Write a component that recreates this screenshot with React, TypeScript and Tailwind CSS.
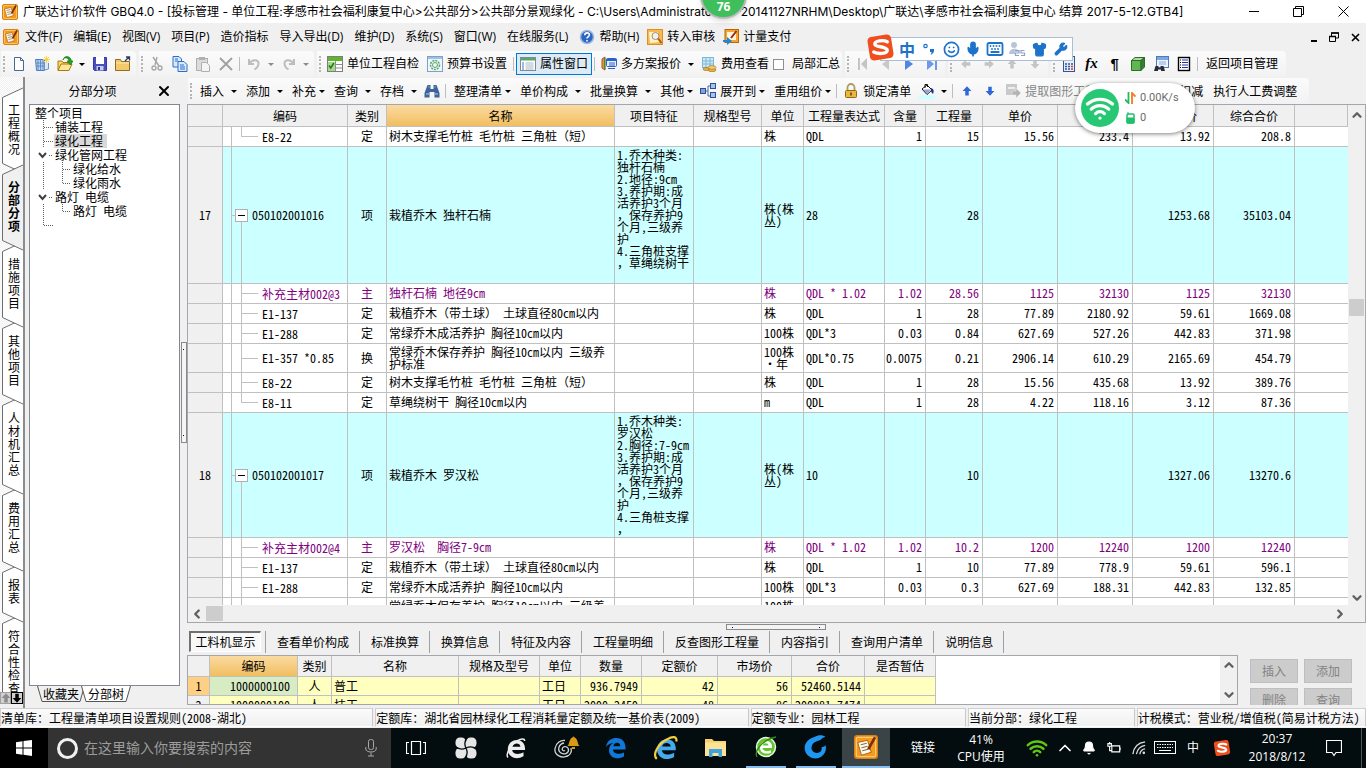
import type { ReactNode } from "react";
import { Mic, Smile, Keyboard, Shirt, Wrench, Wifi, Bell, ChevronUp, ChevronDown, ChevronLeft, ChevronRight, X } from "lucide-react";

type IconProps = { children: ReactNode; w?: number; h?: number; box?: string };

function Svg({ children, w = 16, h = 16, box = "0 0 16 16" }: IconProps) {
  return (
    <svg width={w} height={h} viewBox={box} fill="none" className="shrink-0" aria-hidden="true">
      {children}
    </svg>
  );
}

// hwid also halves full-width punctuation, so keep those marks at full width
function Txt({ children }: { children?: string }) {
  if (!children) return null;
  return (
    <>
      {children.split(/([（），：])/).map((part, i) =>
        /^[（），：]$/.test(part) ? (
          <span key={i} className="[font-feature-settings:normal]">
            {part}
          </span>
        ) : (
          part
        ),
      )}
    </>
  );
}

/* ---------- icons ---------- */

function LogoIcon({ size = 16 }: { size?: number }) {
  return (
    <Svg w={size} h={size}>
      <rect x="0.5" y="0.5" width="15" height="15" rx="1.5" fill="#f59a1c" stroke="#d9800f" />
      <rect x="1.5" y="1.5" width="13" height="13" rx="1" stroke="#fde0a0" strokeWidth="0.6" />
      <path d="M2.500 5 L9 3.500 L11.500 11.500 L5 13.500 Z" fill="#fffaf0" stroke="#a85a08" strokeWidth="0.600" />
      <path d="M4.500 6.500l4-1M5 8.500l4-1M5.500 10.500l4-1" stroke="#8a6a42" strokeWidth="0.700" />
      <path d="M14 1.500 L9.500 9.500" stroke="#7a2f0b" strokeWidth="1.700" />
    </Svg>
  );
}

const NewIcon = () => (
  <Svg>
    <path d="M3.500 1.500h6l3 3v10h-9z" fill="#fff" stroke="#4a6894" />
    <path d="M9.500 1.500v3h3" stroke="#4a6894" />
  </Svg>
);

const BuildingIcon = () => (
  <Svg>
    <path d="M1.500 3.500h9v11h-8z" fill="#b9d3f1" stroke="#4f7fbf" />
    <path d="M4 4v10M6.500 4v10M9 4v10M2 7h8M2 10h8" stroke="#4f7fbf" strokeWidth="0.800" />
    <path d="M10.500 5v9l4-1V7" fill="#dde9f7" stroke="#6f93c4" />
    <path d="M12.500 0v7M9 3.500h7M10 1l5 5M15 1l-5 5" stroke="#f8d34a" />
  </Svg>
);

const OpenIcon = () => (
  <Svg>
    <path d="M1 14V5h4l1 1.500h5V8" fill="#f8d76b" stroke="#a97a12" />
    <path d="M1 14.500 4 8h11l-3 6.500z" fill="#fde795" stroke="#a97a12" />
    <path d="M6 4c1-3 5-3 6 1h-2l3.500 4L16 5h-1.500C13.500-.5 7-1 6 4z" fill="#22a322" stroke="#0c6b0c" strokeWidth="0.600" />
  </Svg>
);

const SaveIcon = () => (
  <Svg>
    <path d="M1.500 1.500h13v13h-12l-1-1z" fill="#4a4fc0" stroke="#3438a0" />
    <rect x="4" y="1" width="8" height="7" fill="#fff" />
    <rect x="4.500" y="10" width="7" height="4.500" fill="#c8cdea" />
    <rect x="6" y="11" width="2" height="3" fill="#27348b" />
  </Svg>
);

const FolderIcon = () => (
  <Svg>
    <path d="M.5 14.500V3.500h5l1 2h8v9z" fill="#f3c96a" stroke="#8d6d20" />
    <path d="M1 7h13" stroke="#fde9b0" />
    <path d="M10 5l4-4M11 1h3.500v3.500" stroke="#2b3f66" strokeWidth="1.300" />
  </Svg>
);

const CutIcon = () => (
  <Svg>
    <path d="M4 1l6 9M8 1L6 9" stroke="#a5a5a5" strokeWidth="1.400" />
    <circle cx="5" cy="12" r="2" stroke="#a5a5a5" strokeWidth="1.300" />
    <circle cx="11" cy="12" r="2" stroke="#a5a5a5" strokeWidth="1.300" />
  </Svg>
);

const CopyIcon = () => (
  <Svg>
    <path d="M1 .5h6l2.500 2.500v8H1z" fill="#d9e8fb" stroke="#2a6fc9" />
    <path d="M6 5.500h6l3 3v7H6z" fill="#d9e8fb" stroke="#2a6fc9" />
    <path d="M8 9h4M8 11h5M8 13h5M3 3h3M3 5h3" stroke="#2a6fc9" />
  </Svg>
);

const PasteIcon = () => (
  <Svg>
    <rect x="1.500" y="2.500" width="11" height="12" fill="#dcdcdc" stroke="#b0b0b0" />
    <rect x="4" y="1" width="6" height="3" fill="#b0b0b0" />
    <path d="M6.500 6.500h5l3 3v6h-8z" fill="#f4f4f4" stroke="#b0b0b0" />
  </Svg>
);

const DeleteIcon = () => (
  <Svg>
    <path d="M2 2l12 12M14 2L2 14" stroke="#a0a0a0" strokeWidth="1.800" />
  </Svg>
);

const UndoIcon = () => (
  <Svg>
    <path d="M3 3v5h5M3.500 7.500C6 3 13 3 12.500 8c-.2 2-1.500 4-4 5.500" stroke="#bdbdbd" strokeWidth="2" />
  </Svg>
);

const RedoIcon = () => (
  <Svg>
    <path d="M13 3v5H8M12.500 7.500C10 3 3 3 3.500 8c.2 2 1.500 4 4 5.500" stroke="#bdbdbd" strokeWidth="2" />
  </Svg>
);

const SheetIcon = () => (
  <Svg>
    <rect x=".5" y=".5" width="15" height="15" fill="#fff" stroke="#7d7d7d" />
    <rect x="1" y="1" width="14" height="4" fill="#5cb82a" />
    <path d="M1 8.500h14M1 12h14M8.500 5v10" stroke="#8f8f8f" />
    <rect x="1" y="6" width="7" height="9" fill="#a5d88a" />
    <path d="M2 9.500l1.800 2.500 3-5" stroke="#1f7a1f" strokeWidth="1.500" />
  </Svg>
);

const GearIcon = () => (
  <Svg>
    <rect x=".5" y=".5" width="15" height="15" fill="#eef6fd" stroke="#7da2c6" />
    <rect x="1" y="1" width="14" height="2" fill="#9cc3e6" />
    <circle cx="8" cy="9" r="4.500" stroke="#5fa567" strokeWidth="1.500" strokeDasharray="2 1" />
    <circle cx="8" cy="9" r="2.500" stroke="#5fa567" />
  </Svg>
);

const PropIcon = () => (
  <Svg>
    <rect x=".5" y="1.500" width="15" height="13" fill="#fff" stroke="#7e8b97" />
    <rect x="1" y="2" width="14" height="2.500" fill="#58a869" />
    <path d="M2 7h2M2 9h2M2 11h2M2 13h2" stroke="#3a7ab8" />
    <path d="M5.500 7h8M5.500 9h8M5.500 11h8M5.500 13h8" stroke="#a9b7c4" />
  </Svg>
);

const PlansIcon = () => (
  <Svg>
    <path d="M1 3v9l3 2V1z" fill="#f2a72e" stroke="#cf3b2e" />
    <path d="M3.500 2v11" stroke="#2a9c3a" strokeWidth="1.500" />
    <rect x="5.500" y="2.500" width="10" height="8" rx="1" fill="#e8f1fd" stroke="#2a62c9" />
    <path d="M5.500 4h10" stroke="#2a62c9" strokeWidth="2" />
    <path d="M8 7h6M8 9h6M7 12.500h7" stroke="#2a62c9" />
  </Svg>
);

const CostIcon = () => (
  <Svg>
    <rect x="1.500" y="1.500" width="11" height="10" fill="#cfe8f6" stroke="#7fb8d8" />
    <path d="M1.500 5h11M1.500 8h11M5 2v9M9 2v9" stroke="#7fb8d8" />
    <ellipse cx="11" cy="14" rx="4" ry="1.700" fill="#e7b34a" stroke="#a57a1d" strokeWidth="0.700" />
    <ellipse cx="11" cy="11.500" rx="4" ry="1.800" fill="#f3cd74" stroke="#a57a1d" strokeWidth="0.700" />
    <ellipse cx="5" cy="13" rx="3" ry="1.500" fill="#e7b34a" stroke="#a57a1d" strokeWidth="0.700" />
  </Svg>
);

const FirstIcon = () => (
  <Svg>
    <path d="M4 2v12" stroke="#c4c4c4" strokeWidth="2" />
    <path d="M12 2v12L6 8z" fill="#c4c4c4" />
  </Svg>
);
const PrevIcon = () => (
  <Svg>
    <path d="M11 3v11L4 8z" fill="#c8c8c8" />
  </Svg>
);
const NextIcon = () => (
  <Svg>
    <path d="M4 2v12l8-6z" fill="#4f86e6" />
  </Svg>
);
const LastIcon = () => (
  <Svg>
    <path d="M3 2v12l7-6z" fill="#6a9ae8" />
    <path d="M12 2v12" stroke="#6a9ae8" strokeWidth="2" />
  </Svg>
);

function ArrowIcon({ turn, fill }: { turn: number; fill: string }) {
  return (
    <Svg w={14} h={14}>
      <path d="M8 2.500l5 5.500h-3v5H6V8H3z" fill={fill} transform={`rotate(${turn} 8 8)`} />
    </Svg>
  );
}

const CalcIcon = () => (
  <Svg>
    <rect x="2.500" y=".5" width="11" height="15" fill="#e7eefb" stroke="#35558f" />
    <rect x="4" y="2" width="8" height="3" fill="#8aa6d9" />
    <path d="M4 8h2M7 8h2M10 8h2M4 10.500h2M7 10.500h2M4 13h2M7 13h2" stroke="#35558f" strokeWidth="1.500" />
    <path d="M10 10.500h2M10 13h2" stroke="#d43a2a" strokeWidth="1.500" />
  </Svg>
);

const CubeIcon = () => (
  <Svg>
    <path d="M1.500 4.500 5 1.500h9.500L11 4.500z" fill="#a9dca0" stroke="#2f6b2c" />
    <path d="M1.500 4.500H11v10H1.500z" fill="#5fb653" stroke="#2f6b2c" />
    <path d="M11 4.500l3.500-3V11L11 14.500z" fill="#357f30" stroke="#2f6b2c" />
  </Svg>
);

const FindFormIcon = () => (
  <Svg>
    <rect x="3.500" y=".5" width="12" height="11" fill="#eaf2fd" stroke="#4f79bd" />
    <rect x="4" y="1" width="11" height="3" fill="#7ea6e0" />
    <path d="M6 6h7M6 8h7" stroke="#8ba8d4" />
    <path d="M1 15l1.500-5h3v2h2v-2h3l1.500 5H8v-1.500H5V15z" fill="#2b2b33" />
  </Svg>
);

const ListIcon = () => (
  <Svg>
    <rect x="2.500" y="1.500" width="11" height="13" fill="#fff" stroke="#000" strokeWidth="1.400" />
    <path d="M4 4h1M4 6.500h1M4 9h1M4 11.500h1" stroke="#000" />
    <path d="M6 4h6M6 6.500h6M6 9h6M6 11.500h6" stroke="#2330a8" />
  </Svg>
);

const BinocularsIcon = () => (
  <Svg>
    <path d="M3.500 2h3v4h3V2h3l3 8v4.500h-5V9h-5v5.500h-5V10z" fill="#3c6499" />
    <path d="M2 11h3M11 11h3M4.500 4h1M10.500 4h1" stroke="#b9d2f0" />
  </Svg>
);

const ExpandIcon = () => (
  <Svg>
    <path d="M5 8h3M8 3v10M8 3h2M8 13h2" stroke="#4469a8" />
    <rect x=".5" y="5.500" width="5" height="5" fill="#7fa3df" stroke="#2d5196" />
    <rect x="10.500" y=".5" width="5" height="5" fill="#a9c2ec" stroke="#2d5196" />
    <rect x="10.500" y="9.500" width="5" height="5" fill="#a9c2ec" stroke="#2d5196" />
  </Svg>
);

const LockIcon = () => (
  <Svg>
    <path d="M4.500 8V4.500a3.500 3.500 0 0 1 7 0V8" stroke="#b09a60" strokeWidth="1.800" />
    <rect x="2.500" y="7.500" width="11" height="7" rx="1" fill="#e9b83f" stroke="#8f6a12" />
    <path d="M8 9.500v3" stroke="#5d430a" strokeWidth="1.500" />
  </Svg>
);

const BucketIcon = () => (
  <Svg>
    <rect x="0" y="12" width="16" height="4" fill="#ccffff" />
    <path d="M3 6l5-4 5 5-5 4.500z" fill="#fff" stroke="#111" />
    <path d="M4 6.500h8l-4 4z" fill="#8fa3d8" />
    <path d="M6 5V1.500h2.500V4" stroke="#111" />
    <path d="M12 5c3 1 3 3 2 6-1.500-1-2.500-3-2-6z" fill="#1b2e80" />
  </Svg>
);

const ExtractIcon = () => (
  <Svg>
    <rect x="1" y="1" width="11" height="11" fill="#c9c9c9" />
    <path d="M3 5h7" stroke="#eee" strokeWidth="2" />
    <path d="M7 8h4V5l5 5-5 5v-3H7z" fill="#b5b5b5" stroke="#eee" strokeWidth="0.500" />
  </Svg>
);

const HelpIcon = () => (
  <Svg>
    <circle cx="8" cy="8" r="6.500" fill="#2b66c4" stroke="#9fb8de" strokeWidth="1.500" />
    <path d="M5.800 6.200c0-3.200 4.700-3 4.600-.2C10.300 7.600 8 7.600 8 9.600M8 11v1.600" stroke="#fff" strokeWidth="1.600" />
  </Svg>
);

const AuditIcon = () => (
  <Svg>
    <rect x=".5" y=".5" width="15" height="15" fill="#f8b84a" stroke="#d9902a" />
    <path d="M2 3h9l1 10-9 1z" fill="#fff3cf" />
    <circle cx="8.500" cy="7" r="3.500" fill="#eaf2f8" stroke="#b08a5a" />
    <path d="M11 9.500l3.500 4.500" stroke="#b3541e" strokeWidth="2" />
  </Svg>
);

const PayIcon = () => (
  <Svg>
    <rect x="2" y=".5" width="13.500" height="13" fill="#f7a530" stroke="#b5670b" />
    <path d="M4 3h9v8H4z" fill="#fff6dc" />
    <path d="M13.500 2L8 9" stroke="#9c2b12" strokeWidth="2" />
    <path d="M0 11h4V8l5 4-5 4v-3H0z" fill="#1e88d8" />
  </Svg>
);

function SogouIcon({ size }: { size: number }) {
  return (
    <Svg w={size} h={size} box="0 0 28 28">
      <rect x="2.500" y="2.500" width="23" height="23" rx="4" fill="#f04e1c" transform="rotate(-9 14 14)" />
      <path d="M20.500 8.500c-4-2.200-12-1-12 2 0 3.300 12 2.300 12 6.200 0 3.500-8.500 4-13 1.600" stroke="#fff" strokeWidth="3.300" strokeLinecap="round" />
    </Svg>
  );
}

/* ---------- toolbar pieces ---------- */

function Group({ children }: { children: ReactNode }) {
  return (
    <div className="flex h-full shrink-0 items-center rounded-r-sm bg-linear-to-b from-[#fbfbfb] to-[#f2f2f2] pr-0.5">
      <span className="flex w-1.5 justify-center">
        <span className="h-4 border-l-2 border-dotted border-[#b4b4b4]" />
      </span>
      {children}
    </div>
  );
}

function IconBtn({ label, children }: { label: string; children: ReactNode }) {
  return (
    <button aria-label={label} className="flex h-6 w-[23px] shrink-0 items-center justify-center">
      {children}
    </button>
  );
}

function Caret({ dim }: { dim?: boolean }) {
  return (
    <span className="flex w-3 shrink-0 justify-center">
      <Svg w={6} h={3} box="0 0 6 3">
        <path d="M0 0h6L3 3z" fill={dim ? "#8c8c8c" : "#000"} />
      </Svg>
    </span>
  );
}

function Sep() {
  return (
    <span className="flex w-[5px] shrink-0 justify-center">
      <span className="h-[14px] w-px bg-[#bdbdbd]" />
    </span>
  );
}

function LabelBtn({ icon, text }: { icon: ReactNode; text: string }) {
  return (
    <button className="flex h-6 shrink-0 items-center gap-1 px-1">
      {icon}
      {text}
    </button>
  );
}

function DropBtn({ text, wide }: { text: string; wide?: boolean }) {
  return (
    <button className="flex h-6 shrink-0 items-center pl-1.5">
      {text}
      <span className={wide ? "ml-1" : ""}>
        <Caret />
      </span>
    </button>
  );
}

/* ---------- top ---------- */

function TitleBar() {
  return (
    <header className="flex h-[23px] shrink-0 items-center bg-white pl-0.5">
      <LogoIcon size={16} />
      <h1 className="ml-[5px] min-w-0 flex-1 truncate font-['Inter','Noto_Sans_CJK_SC',sans-serif]">
        广联达计价软件 GBQ4.0 - [投标管理 - 单位工程:孝感市社会福利康复中心&gt;公共部分&gt;公共部分景观绿化 - C:\Users\Administrator.PC-20141127NRHM\Desktop\广联达\孝感市社会福利康复中心 结算 2017-5-12.GTB4]
      </h1>
      <button aria-label="最小化" className="flex w-[45px] justify-center">
        <span className="h-px w-[10px] bg-black" />
      </button>
      <button aria-label="还原" className="flex w-[45px] justify-center">
        <Svg w={11} h={11} box="0 0 11 11">
          <path d="M.5 2.500h8v8h-8zM2.500 2V.5h8v8H9" stroke="#000" />
        </Svg>
      </button>
      <button aria-label="关闭" className="flex w-[45px] justify-center">
        <Svg w={11} h={11} box="0 0 11 11">
          <path d="M.5.5l10 10M10.500.5l-10 10" stroke="#000" />
        </Svg>
      </button>
    </header>
  );
}

const menus = ["文件(F)", "编辑(E)", "视图(V)", "项目(P)", "造价指标", "导入导出(D)", "维护(D)", "系统(S)", "窗口(W)", "在线服务(L)"];

function MenuBar() {
  return (
    <nav className="flex h-7 shrink-0 items-center pl-[3px]">
      <LogoIcon size={16} />
      <div className="ml-1.5 flex items-center gap-[11px]">
        {menus.map((m) => (
          <button key={m}>{m}</button>
        ))}
        <button className="flex items-center gap-1">
          <HelpIcon />
          帮助(H)
        </button>
      </div>
      <button className="ml-2 flex items-center gap-1">
        <AuditIcon />
        转入审核
      </button>
      <button className="ml-2 flex items-center gap-1">
        <PayIcon />
        计量支付
      </button>
      <div className="ml-auto flex items-center gap-3 pr-1.5">
        <button aria-label="最小化子窗口" className="flex h-[10px] items-end">
          <span className="h-0.5 w-1.5 bg-black" />
        </button>
        <button aria-label="还原子窗口">
          <Svg w={10} h={10} box="0 0 10 10">
            <path d="M.5 4.500h6v5h-6zM2.500 4V1h7v5H7" stroke="#000" />
            <path d="M2 1h8M0 4.500h7" stroke="#000" strokeWidth="1.600" />
          </Svg>
        </button>
        <button aria-label="关闭子窗口">
          <Svg w={9} h={9} box="0 0 9 9">
            <path d="M1 1l7 7M8 1L1 8" stroke="#000" strokeWidth="1.600" />
          </Svg>
        </button>
      </div>
    </nav>
  );
}

function MainToolbar() {
  return (
    <div className="flex h-[26px] shrink-0 items-center gap-[3px] overflow-hidden pl-px">
      <Group>
        <IconBtn label="新建"><NewIcon /></IconBtn>
        <IconBtn label="新建工程"><BuildingIcon /></IconBtn>
        <IconBtn label="打开"><OpenIcon /></IconBtn>
        <Caret />
        <IconBtn label="保存"><SaveIcon /></IconBtn>
        <IconBtn label="目录"><FolderIcon /></IconBtn>
      </Group>
      <Group>
        <IconBtn label="剪切"><CutIcon /></IconBtn>
        <IconBtn label="复制"><CopyIcon /></IconBtn>
        <IconBtn label="粘贴"><PasteIcon /></IconBtn>
        <IconBtn label="删除"><DeleteIcon /></IconBtn>
        <Sep />
        <IconBtn label="撤销"><UndoIcon /></IconBtn>
        <Caret dim />
        <IconBtn label="恢复"><RedoIcon /></IconBtn>
        <Caret dim />
      </Group>
      <Group>
        <LabelBtn icon={<SheetIcon />} text="单位工程自检" />
        <LabelBtn icon={<GearIcon />} text="预算书设置" />
        <Sep />
        <button className="flex h-[22px] shrink-0 items-center gap-1 border border-[#0078d7] bg-[#dcebf8] px-[3px]">
          <PropIcon />
          属性窗口
        </button>
        <Sep />
        <LabelBtn icon={<PlansIcon />} text="多方案报价" />
        <Caret />
        <LabelBtn icon={<CostIcon />} text="费用查看" />
        <label className="flex items-center gap-2">
          <input type="checkbox" className="size-[11px] appearance-none border border-[#8f8f8f] bg-white" />
          局部汇总
        </label>
      </Group>
      <Group>
        <IconBtn label="首行"><FirstIcon /></IconBtn>
        <IconBtn label="上一行"><PrevIcon /></IconBtn>
        <IconBtn label="下一行"><NextIcon /></IconBtn>
        <IconBtn label="末行"><LastIcon /></IconBtn>
      </Group>
      <Group>
        <IconBtn label="左移"><ArrowIcon turn={-90} fill="#c4c4c4" /></IconBtn>
        <IconBtn label="右移"><ArrowIcon turn={90} fill="#c4c4c4" /></IconBtn>
        <IconBtn label="升级"><ArrowIcon turn={0} fill="#c4c4c4" /></IconBtn>
        <IconBtn label="降级"><ArrowIcon turn={180} fill="#c4c4c4" /></IconBtn>
      </Group>
      <Group>
        <IconBtn label="计算器"><CalcIcon /></IconBtn>
        <IconBtn label="函数">
          <span className="font-['Liberation_Serif',serif] text-[15px] font-bold italic">fx</span>
        </IconBtn>
        <IconBtn label="段落">
          <span className="font-['Liberation_Sans',sans-serif] text-[15px] font-bold">¶</span>
        </IconBtn>
        <IconBtn label="立方体"><CubeIcon /></IconBtn>
        <IconBtn label="查找"><FindFormIcon /></IconBtn>
        <IconBtn label="清单"><ListIcon /></IconBtn>
        <Sep />
        <button className="h-6 px-1.5">返回项目管理</button>
      </Group>
    </div>
  );
}

function EditToolbar() {
  return (
    <div className="flex h-[26px] shrink-0 items-center overflow-hidden pl-px">
      <Group>
        <DropBtn text="插入" wide />
        <DropBtn text="添加" wide />
        <DropBtn text="补充" />
        <DropBtn text="查询" wide />
        <DropBtn text="存档" wide />
        <IconBtn label="查找"><BinocularsIcon /></IconBtn>
        <Sep />
        <DropBtn text="整理清单" />
        <DropBtn text="单价构成" wide />
        <DropBtn text="批量换算" wide />
        <DropBtn text="其他" />
        <button className="flex h-6 shrink-0 items-center gap-1 pl-1">
          <ExpandIcon />
          <span className="flex items-center">
            展开到
            <Caret />
          </span>
        </button>
        <DropBtn text="重用组价" />
        <Sep />
        <LabelBtn icon={<LockIcon />} text="锁定清单" />
        <IconBtn label="填充颜色"><BucketIcon /></IconBtn>
        <Caret />
        <Sep />
        <IconBtn label="上移"><ArrowIcon turn={0} fill="#2f66d8" /></IconBtn>
        <IconBtn label="下移"><ArrowIcon turn={180} fill="#2f66d8" /></IconBtn>
        <button disabled className="flex h-6 shrink-0 items-center gap-1 px-1 text-[#868686]">
          <ExtractIcon />
          提取图形工程量
        </button>
        <Caret dim />
        <button className="h-6 shrink-0 pl-1.5">配比材料扣减</button>
        <button className="h-6 shrink-0 px-2.5">执行人工费调整</button>
      </Group>
    </div>
  );
}

/* ---------- left side ---------- */

const pages = ["工程概况", "分部分项", "措施项目", "其他项目", "人材机汇总", "费用汇总", "报表", "符合性检查"];

function PageTabs() {
  return (
    <div className="flex w-[25px] shrink-0 flex-col overflow-hidden border-r-2 border-[#8c8c8c] bg-[repeating-conic-gradient(#fff_0_25%,#f0f0f0_0_50%)] bg-size-[2px_2px]">
      <div className="flex min-h-0 flex-1 flex-col overflow-hidden pt-[10px] pl-0.5">
        {pages.map((p, i) => {
          const active = i === 1;
          const h = p.length * 13 + 35;
          return (
            <button
              key={p}
              className={
                active
                  ? "relative -mb-[10px] shrink-0 pt-4 pb-[19px] pl-1.5 font-bold"
                  : "relative -mb-[10px] shrink-0 pt-4 pb-[19px] pl-1.5"
              }
              style={{ zIndex: active ? 20 : 10 - i }}
            >
              <svg width="22" height={h} className="absolute top-0 left-0" aria-hidden="true">
                <path
                  d={`M22 .5 L.5 10.500 V${h - 10.5} L22 ${h - 0.5}`}
                  fill={active ? "#f0f0f0" : "#fff"}
                  stroke="#6d6d6d"
                />
              </svg>
              <span className="relative block w-3 text-left leading-[13px] break-all">{p}</span>
            </button>
          );
        })}
      </div>
      <div className="z-30 flex h-4 shrink-0 bg-[#f0f0f0]">
        <button aria-label="上一页" className="flex h-3 w-[11px] items-center justify-center border border-[#a0a0a0] bg-[#d0d0d0]">
          <ArrowIcon turn={0} fill="#8c8c8c" />
        </button>
        <button aria-label="下一页" className="flex h-3 w-3 items-center justify-center border border-black bg-[#d0d0d0]">
          <ArrowIcon turn={180} fill="#000" />
        </button>
      </div>
    </div>
  );
}

type Node = { text: string; level: number; open?: boolean; selected?: boolean; last?: boolean };

const nodes: Node[] = [
  { text: "铺装工程", level: 1 },
  { text: "绿化工程", level: 1, selected: true },
  { text: "绿化管网工程", level: 1, open: true },
  { text: "绿化给水", level: 2 },
  { text: "绿化雨水", level: 2, last: true },
  { text: "路灯 电缆", level: 1, open: true },
  { text: "路灯 电缆", level: 2, last: true },
  { text: "", level: 1, last: true },
];

function Guide({ node }: { node: Node }) {
  const dot = { stroke: "#606060", strokeDasharray: "1 1" };
  if (node.level === 2) {
    return (
      <Svg w={37} h={14} box="0 0 37 14">
        <path d="M8.500 0V14" {...dot} />
        <path d={node.last ? "M27.500 0V8" : "M27.500 0V14"} {...dot} />
        <path d="M28 7.500H36" {...dot} />
      </Svg>
    );
  }
  return (
    <Svg w={19} h={14} box="0 0 19 14">
      {node.open ? (
        <path d="M4 5l3.500 4L11 5" stroke="#404040" strokeWidth="2" />
      ) : (
        <path d={node.last ? "M8.500 0V8" : "M8.500 0V14"} {...dot} />
      )}
      <path d={node.open ? "M14 7.500H18" : "M9 7.500H18"} {...dot} />
    </Svg>
  );
}

function SectionPanel() {
  return (
    <aside className="flex w-[155px] shrink-0 flex-col pt-px pl-1">
      <div className="flex h-[26px] shrink-0 items-center">
        <h2 className="flex-1 text-center">分部分项</h2>
        <button aria-label="关闭面板" className="mr-2">
          <X size={16} strokeWidth={3} color="#000" />
        </button>
      </div>
      <div className="min-h-0 flex-1 border border-[#828790] bg-white px-[5px] pt-px leading-[14px]">
        <div>整个项目</div>
        <ul>
          {nodes.map((n, i) => (
            <li key={i} className="flex h-[14px] items-center">
              <Guide node={n} />
              <span className={n.selected ? "bg-[#d9d9d9] px-px pr-1" : "px-px"}>{n.text}</span>
            </li>
          ))}
        </ul>
      </div>
      <div className="flex h-[22px] shrink-0 items-start pl-2 leading-4">
        <button className="relative h-4 w-12">
          <Svg w={48} h={16} box="0 0 48 16">
            <path d="M.5 0L5 15.500H43L47.500 0" fill="#f0f0f0" stroke="#555" />
          </Svg>
          <span className="absolute inset-0">收藏夹</span>
        </button>
        <button className="relative -ml-1 h-4 w-[50px]">
          <Svg w={50} h={16} box="0 0 50 16">
            <path d="M.5 0L5 15.500H45L49.500 0" fill="#fff" stroke="#555" />
          </Svg>
          <span className="absolute inset-0">分部树</span>
        </button>
      </div>
    </aside>
  );
}

/* ---------- main grid ---------- */

type Row = {
  no?: string;
  code: string;
  kind: string;
  name: string;
  feature?: string;
  unit: string;
  nums: string[];
  h: string;
  tone?: "item" | "main";
  last?: boolean;
};

const H = "h-[20px]";

const rows: Row[] = [
  { code: "E8-22", kind: "定", name: "树木支撑毛竹桩 毛竹桩 三角桩（短）", unit: "株", nums: ["QDL", "1", "15", "15.56", "233.4", "13.92", "208.8"], h: H, last: true },
  {
    no: "17", code: "050102001016", kind: "项", name: "栽植乔木 独杆石楠", tone: "item",
    feature: "1.乔木种类:\n独杆石楠\n2.地径:9cm\n3.养护期:成\n活养护3个月\n，保存养护9\n个月,三级养\n护\n4.三角桩支撑\n，草绳绕树干\n ",
    unit: "株(株\n丛)", nums: ["28", "", "28", "", "", "1253.68", "35103.04"], h: "h-[137px]",
  },
  { code: "补充主材002@3", kind: "主", name: "独杆石楠 地径9cm", unit: "株", nums: ["QDL * 1.02", "1.02", "28.56", "1125", "32130", "1125", "32130"], h: H, tone: "main" },
  { code: "E1-137", kind: "定", name: "栽植乔木（带土球） 土球直径80cm以内", unit: "株", nums: ["QDL", "1", "28", "77.89", "2180.92", "59.61", "1669.08"], h: H },
  { code: "E1-288", kind: "定", name: "常绿乔木成活养护 胸径10cm以内", unit: "100株", nums: ["QDL*3", "0.03", "0.84", "627.69", "527.26", "442.83", "371.98"], h: H },
  { code: "E1-357 *0.85", kind: "换", name: "常绿乔木保存养护 胸径10cm以内 三级养\n护标准", unit: "100株\n・年", nums: ["QDL*0.75", "0.0075", "0.21", "2906.14", "610.29", "2165.69", "454.79"], h: "h-[29px]" },
  { code: "E8-22", kind: "定", name: "树木支撑毛竹桩 毛竹桩 三角桩（短）", unit: "株", nums: ["QDL", "1", "28", "15.56", "435.68", "13.92", "389.76"], h: H },
  { code: "E8-11", kind: "定", name: "草绳绕树干 胸径10cm以内", unit: "m", nums: ["QDL", "1", "28", "4.22", "118.16", "3.12", "87.36"], h: H, last: true },
  {
    no: "18", code: "050102001017", kind: "项", name: "栽植乔木 罗汉松", tone: "item",
    feature: "1.乔木种类:\n罗汉松\n2.胸径:7-9cm\n3.养护期:成\n活养护3个月\n，保存养护9\n个月,三级养\n护\n4.三角桩支撑\n，",
    unit: "株(株\n丛)", nums: ["10", "", "10", "", "", "1327.06", "13270.6"], h: "h-[125px]",
  },
  { code: "补充主材002@4", kind: "主", name: "罗汉松  胸径7-9cm", unit: "株", nums: ["QDL * 1.02", "1.02", "10.2", "1200", "12240", "1200", "12240"], h: H, tone: "main" },
  { code: "E1-137", kind: "定", name: "栽植乔木（带土球） 土球直径80cm以内", unit: "株", nums: ["QDL", "1", "10", "77.89", "778.9", "59.61", "596.1"], h: H },
  { code: "E1-288", kind: "定", name: "常绿乔木成活养护 胸径10cm以内", unit: "100株", nums: ["QDL*3", "0.03", "0.3", "627.69", "188.31", "442.83", "132.85"], h: H },
  { code: "", kind: "", name: "常绿乔木保存养护 胸径10cm以内 三级养\n护标准", unit: "100株\n・年", nums: ["", "", "", "", "", "", ""], h: "h-[29px]" },
];

const heads = ["", "编码", "类别", "名称", "项目特征", "规格型号", "单位", "工程量表达式", "含量", "工程量", "单价", "合价", "综合单价", "综合合价", ""];

function CodeCell({ row }: { row: Row }) {
  if (row.tone === "item") {
    return (
      <div className="flex h-full">
        <span className="w-[9px] border-r border-[#c0c0c0]" />
        <span className="flex w-4 flex-col">
          <span className="flex-1" />
          <span className="flex items-center">
            <span className="h-px w-[3px] bg-[#c0c0c0]" />
            <button aria-label="折叠" className="flex size-[13px] items-center justify-center border border-[#b0b0b0] bg-white">
              <span className="h-px w-[7px] bg-black" />
            </button>
          </span>
          <span className="ml-[9px] flex-1 border-l border-[#c0c0c0]" />
        </span>
        <span className="ml-1 self-center">{row.code}</span>
      </div>
    );
  }
  return (
    <div className="flex h-full">
      <span className="w-[9px] border-r border-[#c0c0c0]" />
      <span className={row.last ? "h-1/2 w-[10px] border-r border-[#c0c0c0]" : "w-[10px] border-r border-[#c0c0c0]"} />
      {row.code && <span className="h-px w-4 self-center bg-[#c0c0c0]" />}
      <span className="ml-1 self-center">{row.code}</span>
    </div>
  );
}

const cell = "border-r border-b border-[#c0c0c0] p-0";
const text = "border-r border-b border-[#c0c0c0] p-0 pb-px";

function MainGrid() {
  return (
    <section className="flex min-h-0 flex-1 flex-col border border-[#a5a5ad] bg-[#f0f0f0]">
      <div className="flex min-h-0 flex-1">
        <div className="min-w-0 flex-1 overflow-hidden bg-white">
          <table className="w-full table-fixed border-separate border-spacing-0 leading-3">
            <colgroup>
              <col className="w-[35px]" />
              <col className="w-[125px]" />
              <col className="w-[39px]" />
              <col className="w-[228px]" />
              <col className="w-[79px]" />
              <col className="w-[68px]" />
              <col className="w-[42px]" />
              <col className="w-[81px]" />
              <col className="w-[41px]" />
              <col className="w-[57px]" />
              <col className="w-[75px]" />
              <col className="w-[75px]" />
              <col className="w-[81px]" />
              <col className="w-[81px]" />
              <col />
            </colgroup>
            <thead>
              <tr>
                {heads.map((t, i) => (
                  <th
                    key={i}
                    className={
                      t === "名称"
                        ? `${cell} h-[22px] bg-linear-to-b from-[#fbdba0] to-[#f1be5e] font-normal`
                        : `${cell} h-[22px] bg-[#f0f0f0] font-normal whitespace-nowrap`
                    }
                  >
                    {t}
                  </th>
                ))}
              </tr>
            </thead>
            <tbody>
              {rows.map((r, i) => (
                <tr key={i} className={r.tone === "item" ? "bg-[#ccffff]" : r.tone === "main" ? "text-[#800080]" : ""}>
                  <td className={`${cell} ${r.h} bg-[#f0f0f0] text-center`}>{r.no}</td>
                  <td className={`${cell} ${r.h} whitespace-nowrap`}>
                    <CodeCell row={r} />
                  </td>
                  <td className={`${text} text-center`}>{r.kind}</td>
                  <td className={`${text} pl-0.5 whitespace-pre`}>
                    <Txt>{r.name}</Txt>
                  </td>
                  <td className={`${text} pl-0.5 whitespace-pre`}>
                    <Txt>{r.feature}</Txt>
                  </td>
                  <td className={cell} />
                  <td className={`${text} pl-0.5 whitespace-pre`}>{r.unit}</td>
                  {r.nums.map((n, k) => (
                    <td key={k} className={k === 0 ? `${text} pl-0.5` : `${text} pr-[3px] text-right`}>
                      {n}
                    </td>
                  ))}
                  <td className="border-b border-[#c0c0c0]" />
                </tr>
              ))}
            </tbody>
          </table>
        </div>
        <div className="flex w-[17px] shrink-0 flex-col items-center bg-[#f0f0f0]">
          <ChevronUp size={14} strokeWidth={4} color="#606060" className="mt-[3px] shrink-0" />
          <span className="flex-[177]" />
          <span className="h-[17px] w-[15px] bg-[#cdcdcd]" />
          <span className="flex-[275]" />
          <ChevronDown size={14} strokeWidth={4} color="#606060" className="shrink-0" />
        </div>
      </div>
      <div className="flex h-[17px] shrink-0 items-center bg-[#f0f0f0] pr-[18px]">
        <ChevronLeft size={14} strokeWidth={4} color="#606060" className="ml-0.5" />
        <span className="ml-0.5 h-[15px] w-[17px] bg-[#cdcdcd]" />
        <ChevronRight size={14} strokeWidth={4} color="#606060" className="ml-auto" />
      </div>
    </section>
  );
}

/* ---------- detail area ---------- */

const detailTabs = ["查看单价构成", "标准换算", "换算信息", "特征及内容", "工程量明细", "反查图形工程量", "内容指引", "查询用户清单", "说明信息"];
const detailHeads = ["", "编码", "类别", "名称", "规格及型号", "单位", "数量", "定额价", "市场价", "合价", "是否暂估"];
const detailRows = [
  ["1", "1000000100", "人", "普工", "", "工日", "936.7949", "42", "56", "52460.5144", ""],
  ["2", "1000000100", "人", "技工", "", "工日", "2090.2459", "48", "86", "200881.7474", ""],
];
const ops = ["插入", "添加", "删除", "查询"];

function Detail() {
  return (
    <>
      <div className="flex h-2 shrink-0 items-center justify-center pr-px">
        <div className="flex h-1.5 w-[100px] items-center justify-between border border-[#8a8a8a] bg-[#f4f4f4] px-[5px]">
          <span className="size-px bg-[#00008b]" />
          <span className="size-px bg-[#00008b]" />
        </div>
      </div>
      <div className="flex h-[22px] shrink-0 items-stretch pl-0.5">
        <button className="h-[21px] w-[72px] border-t-2 border-r border-b border-l-2 border-t-[#707070] border-r-white border-b-white border-l-[#707070] bg-[#f8f8f8]">
          工料机显示
        </button>
        <span className="h-[22px] w-[5px] border-r border-[#a0a0a0]" />
        {detailTabs.map((t) => (
          <button key={t} className="h-[22px] border-r border-[#a0a0a0] pr-[10px] pl-[11px]">
            {t}
          </button>
        ))}
      </div>
      <div className="mt-0.5 mb-[3px] flex h-[50px] shrink-0">
        <div className="flex min-w-0 flex-1 overflow-hidden border border-[#a5a5ad] bg-white">
          <div className="flex-1 overflow-hidden">
            <table className="w-[748px] table-fixed border-separate border-spacing-0 leading-3">
              <colgroup>
                <col className="w-[22px]" />
                <col className="w-[88px]" />
                <col className="w-[34px]" />
                <col className="w-[127px]" />
                <col className="w-[81px]" />
                <col className="w-[41px]" />
                <col className="w-[61px]" />
                <col className="w-[76px]" />
                <col className="w-[74px]" />
                <col className="w-[73px]" />
                <col className="w-[71px]" />
              </colgroup>
              <thead>
                <tr>
                  {detailHeads.map((t, i) => (
                    <th
                      key={i}
                      className={
                        i === 1
                          ? `${cell} h-[21px] bg-linear-to-b from-[#fbdba0] to-[#f1be5e] font-normal`
                          : `${cell} h-[21px] bg-[#f0f0f0] font-normal`
                      }
                    >
                      {t}
                    </th>
                  ))}
                </tr>
              </thead>
              <tbody>
                {detailRows.map((r, i) => (
                  <tr key={i} className="bg-[#ffffbf]">
                    {r.map((t, k) => {
                      if (k === 0) {
                        return (
                          <td key={k} className={i === 0 ? `${cell} h-[19px] bg-[#ffd084] text-center` : `${cell} h-[19px] bg-[#f0f0f0] text-center`}>
                            {t}
                          </td>
                        );
                      }
                      if (k === 1) {
                        return (
                          <td key={k} className={i === 0 ? `${cell} bg-[#d8ecc4] pr-[7px] text-right` : `${cell} pr-[7px] text-right`}>
                            {t}
                          </td>
                        );
                      }
                      return (
                        <td key={k} className={k > 5 ? `${cell} pr-[3px] text-right` : k === 2 ? `${cell} text-center` : `${cell} pl-0.5`}>
                          {t}
                        </td>
                      );
                    })}
                  </tr>
                ))}
              </tbody>
            </table>
          </div>
          <div className="flex w-[17px] shrink-0 flex-col items-center justify-between bg-[#f0f0f0] py-0.5">
            <ChevronUp size={14} strokeWidth={4} color="#606060" />
            <ChevronDown size={14} strokeWidth={4} color="#606060" />
          </div>
        </div>
        <div className="grid w-[128px] shrink-0 grid-cols-2 content-start gap-x-1.5 gap-y-[5px] overflow-hidden pt-1 pr-[14px] pl-3">
          {ops.map((o) => (
            <button key={o} disabled className="h-6 border border-[#bfbfbf] bg-[#cccccc] text-[#838383]">
              {o}
            </button>
          ))}
        </div>
      </div>
    </>
  );
}

/* ---------- bottom ---------- */

function StatusBar() {
  const box = "truncate border border-t-[#d0d0d0] border-r-[#c8c8c8] border-b-white border-l-[#d0d0d0] bg-linear-to-b from-[#fbfbfb] to-[#f0f0f0] leading-[17px]";
  return (
    <footer className="flex h-5 shrink-0 gap-0.5 bg-[#f0f0f0] pb-px">
      <div className={`${box} flex-[374]`}><Txt>清单库：工程量清单项目设置规则(2008-湖北)</Txt></div>
      <div className={`${box} flex-[374]`}><Txt>定额库：湖北省园林绿化工程消耗量定额及统一基价表(2009)</Txt></div>
      <div className={`${box} flex-[215]`}><Txt>定额专业：园林工程</Txt></div>
      <div className={`${box} flex-[166]`}><Txt>当前分部：绿化工程</Txt></div>
      <div className={`${box} flex-[229]`}><Txt>计税模式：营业税/增值税(简易计税方法)</Txt></div>
    </footer>
  );
}

function TaskBtn({ label, state, children }: { label: string; state?: "run" | "front"; children: ReactNode }) {
  return (
    <button aria-label={label} className="flex h-10 w-[50px] shrink-0 flex-col px-px">
      <span className={state === "front" ? "flex w-full flex-1 items-center justify-center bg-[#3a4446]" : "flex w-full flex-1 items-center justify-center"}>
        {children}
      </span>
      {state && <span className={state === "front" ? "h-0.5 w-full bg-[#85bdf5]" : "mx-auto h-0.5 w-10 bg-[#85bdf5]"} />}
    </button>
  );
}

function LetterE({ color }: { color: string }) {
  return (
    <path
      fillRule="evenodd"
      d="M21 14H8.200c.3 4 6.200 5.300 11.300 2.300v4C11.500 25 3.500 20.500 3.800 13.200 4 7.600 8 4 12.800 4c5.500 0 8.700 4.200 8.200 10zM8.400 10.700h8c-.2-4.200-7-4.400-8 0z"
      fill={color}
    />
  );
}

function TaskBar() {
  return (
    <div className="flex h-10 shrink-0 items-center overflow-hidden bg-[#030c0e] font-['Open_Sans','Noto_Sans_CJK_SC',sans-serif] text-white">
      <button aria-label="开始" className="flex h-full w-12 shrink-0 items-center justify-center bg-black">
        <Svg>
          <path d="M0 2.200l6.500-.9v6.200H0zM7.500 1.100L16 0v7.500H7.500zM0 8.500h6.500v6.200L0 13.800zM7.500 8.500H16V16l-8.500-1.200z" fill="#fff" />
        </Svg>
      </button>
      <label className="flex h-full w-[343px] shrink-0 items-center bg-[#333333] pl-[9px]">
        <span className="size-[21px] shrink-0 rounded-full border-[3px] border-[#f0f0f0]" />
        <input
          aria-label="搜索"
          placeholder="在这里输入你要搜索的内容"
          className="ml-1.5 min-w-0 flex-1 bg-transparent text-sm text-white outline-none placeholder:text-[#9c9c9c]"
        />
        <Svg w={12} h={18} box="0 0 12 18">
          <rect x="3.500" y=".5" width="5" height="10" rx="2" stroke="#a8a8a8" />
          <path d="M.8 8v2c0 4 10.400 4 10.400 0V8M6 13.500V17M3 17h6" stroke="#a8a8a8" />
        </Svg>
        <span className="w-[14px]" />
      </label>
      <TaskBtn label="任务视图">
        <Svg w={20} h={16} box="0 0 20 16">
          <path d="M5.500 1.500h9v13h-9zM3 2.500H.5v11H3M17 2.500h2.500v11H17" stroke="#fff" strokeWidth="1.200" />
        </Svg>
      </TaskBtn>
      <TaskBtn label="应用">
        <Svg w={22} h={22} box="0 0 22 22">
          <g fill="#e6e6e6">
            <rect x="0.500" y="0.500" width="10.500" height="10.500" rx="4.500" />
            <rect x="11" y="0.500" width="10.500" height="10.500" rx="4.500" />
            <rect x="0.500" y="11" width="10.500" height="10.500" rx="4.500" />
            <rect x="11" y="11" width="10.500" height="10.500" rx="4.500" />
            <circle cx="11" cy="11" r="4" />
          </g>
          <path d="M11 11C9 7 9.500 3.500 12.500 0M11 11c4-2 7.500-1.500 11 1.500M11 11c2 4 1.500 7.500-1.500 11M11 11c-4 2-7.500 1.500-11-1.500" stroke="#030c0e" strokeWidth="1.300" />
        </Svg>
      </TaskBtn>
      <TaskBtn label="浏览器">
        <Svg w={24} h={24} box="0 0 24 24">
          <LetterE color="#ededed" />
          <path d="M4 21.500C1 18 7 8.500 13 5c4-2.500 8-3 7.500 0" stroke="#ededed" strokeWidth="1.500" />
        </Svg>
      </TaskBtn>
      <TaskBtn label="螺旋">
        <Svg w={30} h={26} box="0 0 30 26">
          <path d="M14 15.500c-1.500 1-3.500-.5-2.500-2.500 1.500-2.500 6-1.500 6 2 0 3.500-4.500 5-7.500 3C6 15.500 7.500 9 13 8M17 20.500C11 24.500 3 20 4 13.500 5 7.500 10 5 14 5.500M20 13c1 4-1 7-4 8.500" stroke="#d5d5d5" strokeWidth="1.300" />
          <path d="M16.500 11c2-1.500 1.500-7.500 5-8.500.3-1.500 1.700-1.500 2 0 3.500 1 3 7 5 8.500zM21 12h3v2h-3z" fill="#d99a12" />
        </Svg>
      </TaskBtn>
      <TaskBtn label="Edge">
        <Svg w={24} h={24} box="0 0 24 24">
          <path
            fillRule="evenodd"
            d="M2 11C3 4.500 7.500 2 12.500 2c6 0 9.500 4.500 9 11.500H9c.3 4.500 6.500 5.500 11 3v4c-7 4-15.500 1-15-7 .3-3 2-5.500 4.500-6.500C6.500 7 4 8.500 2 11zm7.300-.8h7c0-4.500-6-4.500-7 0z"
            fill="#0f78d8"
          />
        </Svg>
      </TaskBtn>
      <TaskBtn label="IE">
        <Svg w={26} h={26} box="0 0 24 24">
          <LetterE color="#45a9ee" />
          <path d="M3.500 22C-1 18 5 8 13 4c5-3 9.500-3 8.500 2" stroke="#f7cf3c" strokeWidth="2" />
        </Svg>
      </TaskBtn>
      <TaskBtn label="文件资源管理器">
        <Svg w={22} h={20} box="0 0 22 20">
          <path d="M0 1h7l2 2h12v15H0z" fill="#f5cf6b" />
          <path d="M0 4.500h21V18H0z" fill="#fde295" />
          <path d="M4 19v-8h13v8h-3.500v-4h-6v4z" fill="#3da4e0" />
        </Svg>
      </TaskBtn>
      <TaskBtn label="360浏览器" state="run">
        <Svg w={24} h={24} box="0 0 24 24">
          <circle cx="12" cy="12" r="9.500" fill="#63c42e" stroke="#e8f7df" strokeWidth="1.500" />
          <path fillRule="evenodd" d="M18 13H8.500c.3 3.200 4.500 4 8.500 2.200v2.500C11.500 20 5.500 17.500 6 12c.4-4 3.500-6 6.500-6 4 0 6 3 5.500 7zM8.800 10.500h5.700c-.3-3-5-3-5.700 0z" fill="#fff" />
          <path d="M3 22C0 16 8 5 22 2" stroke="#2f8a12" strokeWidth="1.300" />
        </Svg>
      </TaskBtn>
      <TaskBtn label="广联达" state="run">
        <Svg w={26} h={26} box="0 0 26 26">
          <path d="M22.500 3c-2-2-7-2.500-11 0C4 5 .5 11 2 16.500 4 24 13 26.500 18.500 22.500c4.500-3 5-8 4-11.500-.5 1.500-2 2-4 2 1 3-1 6-4.500 6-4.500 0-6.500-4-5-7.500C10.500 7 17 7 18.500 5c.8-1 2-2 4-2z" fill="#1f97f0" />
        </Svg>
      </TaskBtn>
      <TaskBtn label="GBQ" state="front"><LogoIcon size={24} /></TaskBtn>

      <div className="ml-auto flex h-full shrink-0 items-center">
        <span className="w-12 text-center">链接</span>
        <div className="w-[68px] text-center leading-[17px]">
          <div>41%</div>
          <div>CPU使用</div>
        </div>
        <span className="flex w-11 justify-center"><Wifi size={22} strokeWidth={2.8} color="#5fc812" /></span>
        <span className="flex w-3 justify-center"><ChevronUp size={20} className="shrink-0" /></span>
        <span className="flex w-9 justify-center"><Bell size={14} fill="#fff" /></span>
        <span className="flex w-[14px] justify-center">
          <Svg w={16} h={14}>
            <path d="M5.500 5.500h9v7h-9zM15 7.500v3M3 1v3M1 3h4v3H1zM3 6v5h2" stroke="#fff" strokeWidth="1.300" />
          </Svg>
        </span>
        <span className="flex w-9 justify-center">
          <Svg w={14} h={14}>
            <path d="M1 15C2 7 7 2 15 1M5 15c1-5 4-9 10-10M9 15c0-3 3-6 6-6" stroke="#ddd" strokeWidth="1.500" />
            <circle cx="13.500" cy="13.500" r="1.500" fill="#ddd" />
          </Svg>
        </span>
        <span className="flex w-4 justify-center">
          <Svg w={22} h={16} box="0 0 22 16">
            <rect x=".5" y="1.500" width="21" height="12" stroke="#fff" />
            <path d="M3 4.500h16M3 7.500h16" stroke="#fff" strokeDasharray="1.500 1" />
            <path d="M5 10.500h12" stroke="#fff" />
          </Svg>
        </span>
        <span className="w-10 text-center">中</span>
        <span className="flex w-[18px] justify-center"><SogouIcon size={18} /></span>
        <div className="w-[92px] text-center leading-[18px]">
          <div>20:37</div>
          <div>2018/8/12</div>
        </div>
        <button aria-label="通知" className="flex h-full w-[22px] items-center justify-center">
          <Svg w={16} h={17} box="0 0 16 17">
            <path d="M.5.5h15v12H10L8 15.500 6 12.500H.5z" stroke="#fff" strokeWidth="1.200" />
          </Svg>
        </button>
        <span className="ml-4 h-full w-[5px] border-l border-[#555]" />
      </div>
    </div>
  );
}

/* ---------- floating widgets ---------- */

function Floating() {
  return (
    <>
      <div className="absolute -top-7 left-[700px] z-40 flex size-[47px] items-end justify-center rounded-full border-2 border-[#b9b9b9] bg-[#3fbf5c] pb-0.5 font-['Open_Sans',sans-serif] leading-4 font-bold text-white shadow-md">
        76
      </div>
      <div className="absolute top-[37px] left-[880px] z-40 flex h-6 w-[193px] items-center border border-[#a9bfd6] bg-white pl-[15px] text-[#1d73c9]">
        <span className="w-[22px] text-center font-['Noto_Sans_CJK_SC',sans-serif] text-base leading-5 font-bold">中</span>
        <span className="flex w-[22px] justify-center">
          <Svg w={12} h={14} box="0 0 12 14">
            <circle cx="2.500" cy="4" r="1.700" stroke="#1d73c9" strokeWidth="1.200" />
            <path d="M7 7h4c.5 3-1 5-3.500 6 1-1.500 1-2 .8-3H7z" fill="#1d73c9" />
          </Svg>
        </span>
        <span className="flex w-[22px] justify-center"><Smile size={17} strokeWidth={2.4} /></span>
        <span className="flex w-[22px] justify-center">
          <Mic size={16} strokeWidth={2.6} fill="#1d73c9" />
        </span>
        <span className="flex w-[22px] justify-center"><Keyboard size={18} strokeWidth={2.4} /></span>
        <span className="flex w-[22px] justify-center">
          <Svg w={18} h={16} box="0 0 18 16">
            <circle cx="6" cy="4" r="3" fill="#b7c4dc" />
            <path d="M1 13c0-6 9-7 10-2H7v2z" fill="#b7c4dc" />
            <path d="M7.500 9.500H11v2.500H7.500v2.500H11M16.500 9.500H13v2.500h3.500v2.500H13" stroke="#8fa2c6" strokeWidth="1.200" />
          </Svg>
        </span>
        <span className="flex w-[22px] justify-center"><Shirt size={15} fill="#1d73c9" /></span>
        <span className="flex w-[22px] justify-center"><Wrench size={14} fill="#1d73c9" /></span>
      </div>
      <div className="absolute top-[33px] left-[866px] z-50">
        <SogouIcon size={29} />
      </div>
      <div className="absolute top-[83px] left-[1075px] z-40 flex h-[50px] w-[120px] items-center rounded-full bg-white pl-1.5 font-['Roboto',sans-serif] text-[#6b6b6b] shadow-[0_1px_4px_rgba(0,0,0,0.5)]">
        <span className="flex size-[38px] items-center justify-center rounded-full bg-[#27c873]">
          <Wifi size={30} strokeWidth={2.6} color="#fff" />
        </span>
        <div className="ml-1.5 flex flex-col gap-1 text-[11px] leading-4">
          <span className="flex items-center gap-1">
            <Svg w={11} h={12} box="0 0 11 12">
              <path d="M3.500 0v11L0 7.500" stroke="#27b866" strokeWidth="1.800" />
              <path d="M7 12V1l3.500 3.500" stroke="#f07c1e" strokeWidth="1.800" />
            </Svg>
            0.00K/s
          </span>
          <span className="flex items-center gap-1">
            <Svg w={11} h={12} box="0 0 11 12">
              <rect x="2" y="2" width="7" height="9" rx="1" stroke="#1fbf6b" strokeWidth="1.500" />
              <path d="M3 0v3M2 6h7v5H2z" fill="#1fbf6b" stroke="#1fbf6b" />
            </Svg>
            0
          </span>
        </div>
      </div>
    </>
  );
}

export default function App() {
  return (
    <div className="relative flex h-screen w-full flex-col overflow-hidden bg-[#f0f0f0] font-['Open_Sans','Noto_Sans_CJK_SC',sans-serif] text-xs text-black">
      <TitleBar />
      <MenuBar />
      <MainToolbar />
      <main className="flex min-h-0 flex-1 font-['Noto_Sans_CJK_SC',sans-serif] [font-feature-settings:'hwid']">
        <PageTabs />
        <SectionPanel />
        <div className="flex w-[7px] shrink-0 items-center justify-center pb-px">
          <div className="flex h-[101px] w-1.5 flex-col items-center justify-between border border-[#8a8a8a] bg-[#f4f4f4] py-1.5">
            <span className="size-px bg-[#00008b]" />
            <span className="size-px bg-[#00008b]" />
          </div>
        </div>
        <div className="flex min-w-0 flex-1 flex-col pt-px">
          <EditToolbar />
          <MainGrid />
          <Detail />
        </div>
      </main>
      <div className="shrink-0 font-['Noto_Sans_CJK_SC',sans-serif] [font-feature-settings:'hwid']">
        <StatusBar />
      </div>
      <TaskBar />
      <Floating />
    </div>
  );
}
